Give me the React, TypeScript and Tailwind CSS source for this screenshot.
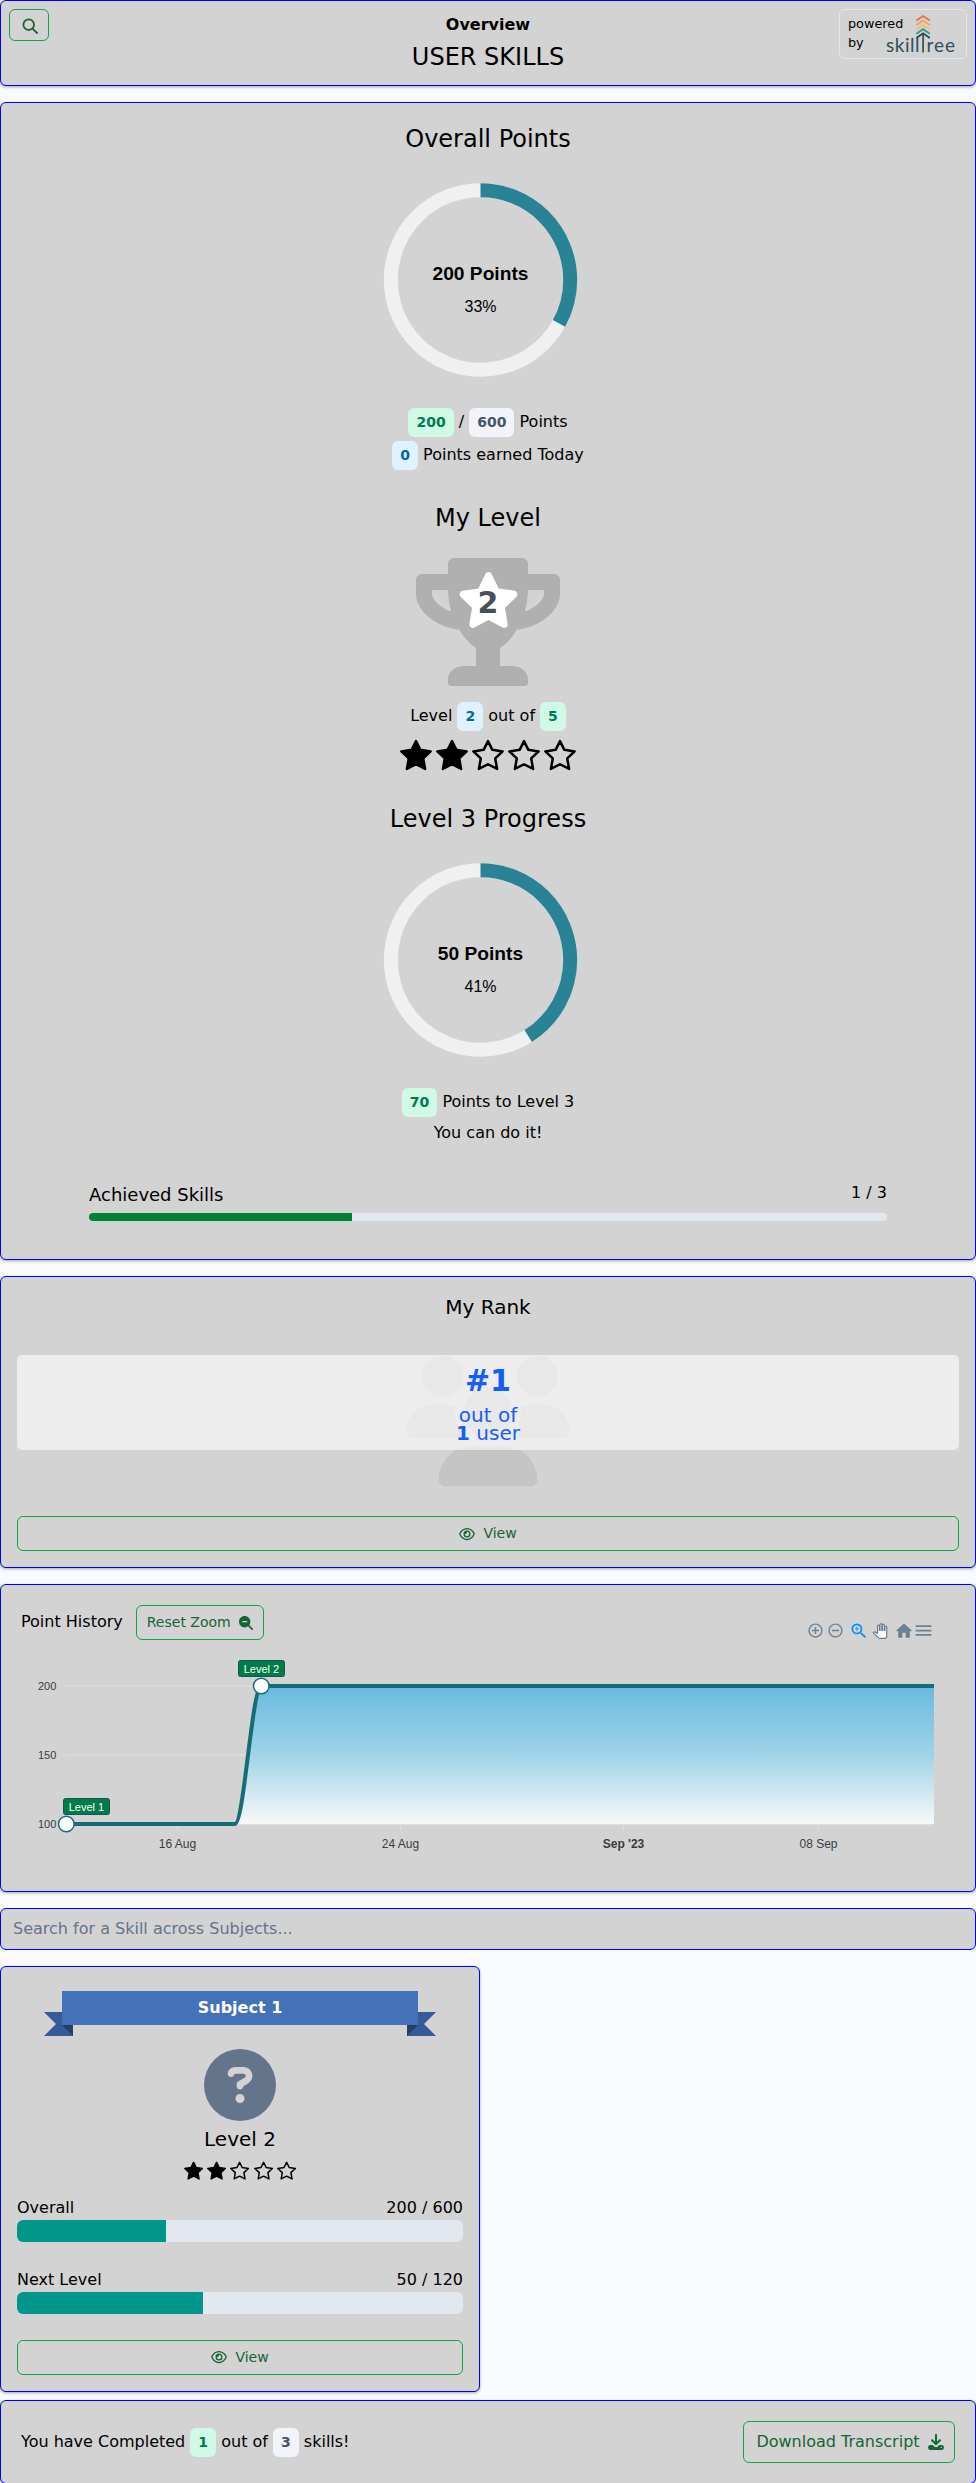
import React from "react";
import { FaTrophy } from "react-icons/fa";
import { FaStar, FaUsers, FaCircleQuestion, FaRegEye, FaMagnifyingGlassMinus } from "react-icons/fa6";
import { MdAddCircleOutline, MdRemoveCircleOutline, MdZoomIn, MdHome, MdMenu } from "react-icons/md";

const card = "rounded-md border border-[#0000ff] bg-[#d3d3d3] shadow-[0_1px_3px_rgba(0,0,0,0.35)]";
const outlineButton =
  "flex items-center justify-center gap-2 rounded-md border border-[#16a34a] text-[#166534]";

const tones = {
  green: "bg-[#d0fae5] text-[#007a55]",
  gray: "bg-[#f1f5f9] text-[#45556c]",
  blue: "bg-[#dff2fe] text-[#0069a8]",
};

function Tag({ tone, children }: { tone: keyof typeof tones; children: React.ReactNode }) {
  return (
    <span className={`inline-block rounded-md px-2 py-1 text-[14px] leading-[21px] font-bold ${tones[tone]}`}>
      {children}
    </span>
  );
}

function Star({ filled, className }: { filled: boolean; className: string }) {
  return (
    <svg viewBox="0 0 14 14" className={className}>
      <path
        d="M7 0.95L8.9 4.75L13.4 5.42L10.15 8.5L10.97 13.1L7 11.05L3.03 13.1L3.85 8.5L0.6 5.42L5.1 4.75Z"
        fill={filled ? "#000" : "none"}
        stroke="#000"
        strokeWidth="1.1"
        strokeLinejoin="round"
      />
    </svg>
  );
}

function Rating({ size }: { size: string }) {
  return (
    <div className="flex justify-center gap-1">
      {[1, 2, 3, 4, 5].map((n) => (
        <Star key={n} filled={n <= 2} className={size} />
      ))}
    </div>
  );
}

function Donut({ percent, label }: { percent: number; label: string }) {
  const circumference = 2 * Math.PI * 89.7;
  return (
    <svg viewBox="0 0 290 250" className="block h-[250px] w-[290px]">
      <circle cx="137.5" cy="125" r="89.7" fill="none" stroke="#eff0f2" strokeWidth="14" />
      <circle
        cx="137.5"
        cy="125"
        r="89.7"
        fill="none"
        stroke="#2a8394"
        strokeWidth="14"
        strokeDasharray={`${(circumference * percent) / 100} ${circumference}`}
        transform="rotate(-90 137.5 125)"
      />
      <text x="137.5" y="125" textAnchor="middle" fontFamily="Liberation Sans, sans-serif" fontSize="19.2" fontWeight="700">
        {label}
      </text>
      <text x="137.5" y="157" textAnchor="middle" fontFamily="Liberation Sans, sans-serif" fontSize="16">
        {percent}%
      </text>
    </svg>
  );
}

function SearchIcon() {
  return (
    <svg viewBox="0 0 16 16" className="size-4" fill="none" stroke="#166534" strokeWidth="1.8" strokeLinecap="round">
      <circle cx="6.7" cy="6.7" r="5.3" />
      <path d="M10.6 10.6L15 15" />
    </svg>
  );
}

function DownloadIcon() {
  return (
    <svg viewBox="0 0 16 16" className="size-4" fill="none" stroke="#166534">
      <path d="M8 1V9.6M4 6.2L8 10L12 6.2" strokeWidth="2" strokeLinecap="round" strokeLinejoin="round" />
      <path
        d="M2 11H4.6L6.6 12.7Q8 13.6 9.4 12.7L11.4 11H14Q16 11.2 16 13.5Q16 15.8 14 16H2Q0 15.8 0 13.5Q0 11.2 2 11Z"
        fill="#166534"
        stroke="none"
      />
      <circle cx="13.3" cy="13.4" r="0.7" fill="#d3d3d3" stroke="none" />
    </svg>
  );
}

function SkillTreeLogo() {
  const chevrons = [
    ["#e76f51", 2],
    ["#f4a261", 6.4],
    ["#e9c46a", 10.9],
    ["#2a9d8f", 15.2],
    ["#264653", 19.3],
  ] as const;
  return (
    <svg viewBox="0 0 72 44" className="h-[44px] w-[72px]">
      {chevrons.map(([color, y]) => (
        <path key={color} d={`M30.4 ${y + 4.6}L37.1 ${y}L43.8 ${y + 4.6}`} fill="none" stroke={color} strokeWidth="1.8" />
      ))}
      <path d="M37.1 19.3V38.4" stroke="#2f505c" strokeWidth="1.7" />
      <text x="0" y="38.4" fontFamily="Lato, sans-serif" fontSize="19" fill="#2f505c" textLength="33.5">
        skill
      </text>
      <text x="40.4" y="38.4" fontFamily="Lato, sans-serif" fontSize="19" fill="#2f505c" textLength="28.6">
        ree
      </text>
    </svg>
  );
}

function Header() {
  return (
    <header className={`${card} flex h-[86px] items-start justify-between px-2 pt-2`}>
      <div className="w-[128px]">
        <button className={`${outlineButton} h-8 w-10 pt-px pl-px`}>
          <SearchIcon />
        </button>
      </div>
      <div className="pt-1 text-center">
        <div className="text-[16px] leading-6 font-bold">Overview</div>
        <div className="mt-1 text-[24px] leading-8">USER SKILLS</div>
      </div>
      <div className="flex h-[50px] w-[128px] items-start justify-between rounded-md border border-[#e2e8f0] pt-[4px] pr-[8px] pl-2">
        <div className="w-10 text-[12.8px] leading-[19.2px]">powered by</div>
        <div className="-ml-3 h-[42px]">
          <SkillTreeLogo />
        </div>
      </div>
    </header>
  );
}

function Summary() {
  return (
    <section className={`${card} mt-4 flex h-[1158px] flex-col items-center pt-5`}>
      <h2 className="text-[24px] leading-8">Overall Points</h2>
      <Donut percent={33} label="200 Points" />
      <div className="mt-[3px] h-[29px] leading-[27px]">
        <Tag tone="green">200</Tag> / <Tag tone="gray">600</Tag> Points
      </div>
      <div className="mt-1 h-[29px] leading-[27px]">
        <Tag tone="blue">0</Tag> Points earned Today
      </div>

      <h2 className="mt-8 text-[24px] leading-8">My Level</h2>
      <div className="relative mt-6 h-32 w-36">
        <FaTrophy className="h-32 w-36 text-[#b0b0b0]" />
        <FaStar className="absolute top-[14px] left-[41px] h-[56px] w-[63px] text-white" />
        <span className="absolute top-[27px] left-0 w-full text-center text-[30px] leading-[36px] font-bold text-[#495057]">2</span>
      </div>
      <div className="mt-4 mb-2 h-[29px] leading-[27px]">
        Level <Tag tone="blue">2</Tag> out of <Tag tone="green">5</Tag>
      </div>
      <Rating size="size-8" />

      <h2 className="mt-8 text-[24px] leading-8">Level 3 Progress</h2>
      <Donut percent={41} label="50 Points" />
      <div className="mt-[3px] h-[29px] leading-[27px]">
        <Tag tone="green">70</Tag> Points to Level 3
      </div>
      <div className="mt-1 leading-6">You can do it!</div>

      <div className="mt-[36px] w-[798px]">
        <div className="flex h-8 items-start justify-between">
          <span className="text-[18px] leading-7">Achieved Skills</span>
          <span className="leading-6">1 / 3</span>
        </div>
        <div className="h-2 overflow-hidden rounded-[4px] bg-[#e2e8f0]">
          <div className="h-full w-[33%] bg-[#008236]" />
        </div>
      </div>
    </section>
  );
}

function Rank() {
  return (
    <section className={`${card} mt-4 h-[292px] px-4 pt-4`}>
      <h2 className="text-center text-[20px] leading-7">My Rank</h2>
      <div className="relative mt-[34px] h-[161px]">
        <FaUsers className="absolute top-0 left-[389px] h-[132px] w-[164px] text-[#c5c5c5]" />
        <div className="relative h-[95px] rounded-[5px] bg-white/60 pt-2 text-center text-[#155dfc]">
          <div className="text-[30px] leading-9 font-bold">#1</div>
          <div className="mt-[7px] text-[20px] leading-[18px]">out of</div>
          <div className="text-[20px] leading-[18px]">
            <span className="font-bold">1</span> user
          </div>
        </div>
      </div>
      <button className={`${outlineButton} h-[35px] w-full text-[14px]`}>
        <FaRegEye className="h-[14px] w-4" />
        View
      </button>
    </section>
  );
}

const annotation = (x: number, y: number, text: string) => (
  <g>
    <rect x={x} y={y} width="46" height="16" rx="2" fill="#007c49" stroke="#1f4f5c" />
    <text x={x + 23} y={y + 12.5} textAnchor="middle" fill="#fff">
      {text}
    </text>
  </g>
);

function HistoryChart() {
  return (
    <svg
      viewBox="0 0 974 220"
      className="block h-[220px] w-full"
      fontFamily="Liberation Sans, sans-serif"
      fontSize="11"
      fill="#373d3f"
    >
      <defs>
        <linearGradient id="area" x1="0" y1="0" x2="0" y2="1">
          <stop offset="0" stopColor="#6abade" />
          <stop offset="0.5" stopColor="#a0d3e8" />
          <stop offset="1" stopColor="#f8f9f9" />
        </linearGradient>
      </defs>
      <path d="M65.3 46H933M65.3 115H933" stroke="#dbdbdb" strokeWidth="1.5" />
      <path d="M65.3 184.5H930" stroke="#e0e0e0" />
      <path d="M176.5 185V190M399.5 185V190M622.5 185V190M817.5 185V190" stroke="#e0e0e0" />
      <path d="M234 184C243 184 251 46 260.3 46H933V184Z" fill="url(#area)" />
      <path d="M65.3 184H234C243 184 251 46 260.3 46H933" fill="none" stroke="#156e76" strokeWidth="4" />
      <g textAnchor="end">
        <text x="55.3" y="50">200</text>
        <text x="55.3" y="119">150</text>
        <text x="55.3" y="188">100</text>
      </g>
      <circle cx="65.3" cy="184" r="7.8" fill="#fff" stroke="#156e76" strokeWidth="1.5" />
      <circle cx="260.3" cy="46" r="7.8" fill="#fff" stroke="#156e76" strokeWidth="1.5" />
      {annotation(62.5, 158.5, "Level 1")}
      {annotation(237.5, 20.5, "Level 2")}
      <g textAnchor="middle" fontSize="12">
        <text x="176.5" y="208">16 Aug</text>
        <text x="399.5" y="208">24 Aug</text>
        <text x="622.5" y="208" fontWeight="700">Sep '23</text>
        <text x="817.5" y="208">08 Sep</text>
      </g>
    </svg>
  );
}

function History() {
  return (
    <section className={`${card} mt-4 h-[308px] pt-5`}>
      <div className="flex h-[35px] items-center justify-between pr-[42px] pl-5">
        <div className="flex items-center gap-[13px]">
          <h2 className="-mt-0.5 text-[16px] leading-6">Point History</h2>
          <button className={`${outlineButton} h-[35px] w-[128px] text-[14px]`}>
            Reset Zoom
            <FaMagnifyingGlassMinus className="size-[14px]" />
          </button>
        </div>
        <div className="mt-4 flex items-center text-[#6e8192]">
          <MdAddCircleOutline className="size-[17px]" />
          <MdRemoveCircleOutline className="ml-[3px] size-[17px]" />
          <MdZoomIn className="ml-[5px] size-[20px] text-[#008ffb]" />
          <svg viewBox="-1 -1 26 26" className="ml-[3px] size-[16px]" fill="#fefefe" stroke="#6e8192" strokeWidth="2">
            <path d="M23 5.5V20c0 2.2-1.8 4-4 4h-7.3c-1.08 0-2.1-.43-2.85-1.19L1 14.83s1.26-1.23 1.3-1.25c.22-.19.49-.29.79-.29.22 0 .42.06.6.16.04.01 4.31 2.46 4.31 2.46V4c0-.83.67-1.5 1.5-1.5S11 3.17 11 4v7h1V1.5c0-.83.67-1.5 1.5-1.5S15 .67 15 1.5V11h1V2.5c0-.83.67-1.5 1.5-1.5s1.5.67 1.5 1.5V11h1V5.5c0-.83.67-1.5 1.5-1.5s1.5.67 1.5 1.5z" />
          </svg>
          <MdHome className="ml-[6px] size-[20px]" />
          <MdMenu className="-mr-px -ml-px size-[21px]" />
        </div>
      </div>
      <HistoryChart />
    </section>
  );
}

function Progress({ label, value, width }: { label: string; value: string; width: string }) {
  return (
    <div>
      <div className="flex justify-between leading-6">
        <span>{label}</span>
        <span>{value}</span>
      </div>
      <div className="h-[22px] overflow-hidden rounded-md bg-[#e2e8f0]">
        <div className={`h-full bg-[#009689] ${width}`} />
      </div>
    </div>
  );
}

function Subject() {
  return (
    <section className={`${card} mt-4 h-[426px] w-[480px] px-4 pt-6`}>
      <div className="relative mx-auto h-[45px] w-[392px]">
        <svg viewBox="0 0 392 45" className="absolute inset-0 h-[45px] w-[392px]">
          <path d="M0 21H29V45H0L12 33Z M392 21H363V45H392L380 33Z" fill="#365b96" />
          <path d="M18 34H29V45Z M374 34H363V45Z" fill="#263f68" />
        </svg>
        <div className="relative mx-auto h-[34px] w-[356px] bg-[#4472b9] text-center text-[16px] leading-[33px] font-bold text-white">
          Subject 1
        </div>
      </div>
      <FaCircleQuestion className="mx-auto mt-[13px] block size-[72px] text-[#64748b]" />
      <div className="mt-1 mb-2 text-center text-[20px] leading-7">Level 2</div>
      <Rating size="size-[19.2px]" />
      <div className="mt-[15.8px] flex flex-col gap-[26px]">
        <Progress label="Overall" value="200 / 600" width="w-[33.4%]" />
        <Progress label="Next Level" value="50 / 120" width="w-[41.7%]" />
        <button className={`${outlineButton} h-[35px] w-full text-[14px]`}>
          <FaRegEye className="h-[14px] w-4" />
          View
        </button>
      </div>
    </section>
  );
}

function Footer() {
  return (
    <footer className={`${card} mt-2 flex h-[84px] items-center justify-between px-5`}>
      <div className="h-[29px] leading-[27px]">
        You have Completed <Tag tone="green">1</Tag> out of <Tag tone="gray">3</Tag> skills!
      </div>
      <button className={`${outlineButton} h-[42px] w-[212px] pl-0.5 text-[16px]`}>
        Download Transcript
        <DownloadIcon />
      </button>
    </footer>
  );
}

export default function App() {
  return (
    <div className="h-[2483px] w-full overflow-hidden bg-[#f8fafc] font-['DejaVu_Sans',sans-serif] text-[16px] text-black">
      <Header />
      <Summary />
      <Rank />
      <History />
      <input
        type="text"
        placeholder="Search for a Skill across Subjects..."
        className="mt-4 block h-[42px] w-full rounded-md border border-[#0000ff] bg-[#d3d3d3] px-3 pb-0.5 placeholder:text-[#64748b]"
      />
      <Subject />
      <Footer />
    </div>
  );
}
